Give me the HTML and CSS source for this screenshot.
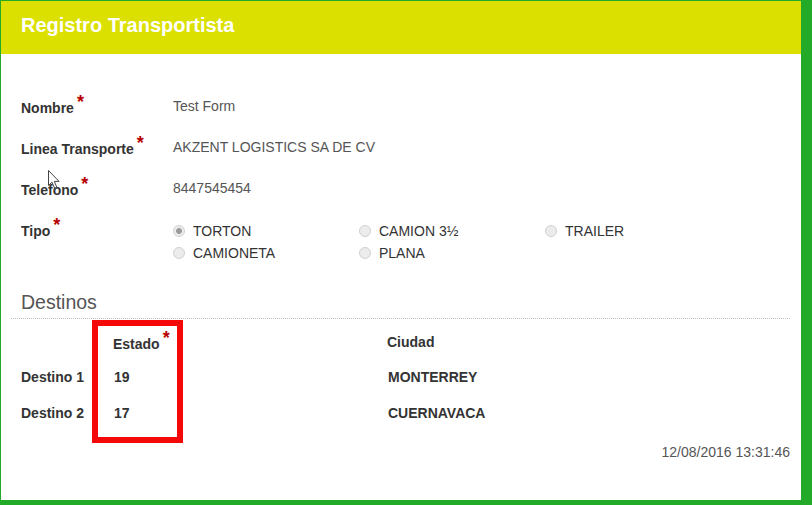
FILE: index.html
```html
<!DOCTYPE html>
<html lang="es">
<head>
<meta charset="utf-8">
<title>Registro Transportista</title>
<link rel="stylesheet" href="styles.css">
</head>
<body>
<div class="frame">
  <header class="topbar"><h1 class="title">Registro Transportista</h1></header>
  <main class="content">
    <div class="field">
      <div class="label">Nombre<span class="req">*</span></div>
      <div class="value">Test Form</div>
    </div>
    <div class="field">
      <div class="label">Linea Transporte<span class="req">*</span></div>
      <div class="value">AKZENT LOGISTICS SA DE CV</div>
    </div>
    <div class="field">
      <div class="label">Telefono<span class="req">*</span></div>
      <div class="value">8447545454</div>
    </div>
    <div class="field">
      <div class="label">Tipo<span class="req">*</span></div>
      <div class="radios">
        <label class="radio"><input type="radio" name="tipo" checked disabled><span>TORTON</span></label>
        <label class="radio"><input type="radio" name="tipo" disabled><span>CAMION 3½</span></label>
        <label class="radio"><input type="radio" name="tipo" disabled><span>TRAILER</span></label>
        <label class="radio"><input type="radio" name="tipo" disabled><span>CAMIONETA</span></label>
        <label class="radio"><input type="radio" name="tipo" disabled><span>PLANA</span></label>
      </div>
    </div>
    <h2 class="section">Destinos</h2>
    <div class="dest">
      <div class="dhead"></div>
      <div class="dhead">Estado<span class="req">*</span></div>
      <div class="dhead ciudad">Ciudad</div>
      <div class="dlabel r1">Destino 1</div>
      <div class="dval r1">19</div>
      <div class="dval r1 city">MONTERREY</div>
      <div class="dlabel">Destino 2</div>
      <div class="dval">17</div>
      <div class="dval city">CUERNAVACA</div>
    </div>
    <div class="stamp">12/08/2016 13:31:46</div>
  </main>
  <div class="highlight"></div>
  <svg class="cursor" width="14" height="20" viewBox="0 0 14 20" aria-hidden="true">
    <path d="M0.5 0.5 L0.5 15.5 L4 12.2 L6.6 18.2 L8.8 17.2 L6.3 11.4 L11 11.4 Z" fill="#fff" stroke="#444" stroke-width="1" stroke-linejoin="miter"/>
  </svg>
</div>
</body>
</html>
```
FILE: styles.css
```css
* { box-sizing: border-box; }
html, body { margin: 0; padding: 0; }
body {
  width: 812px;
  height: 505px;
  overflow: hidden;
  font-family: "Liberation Sans", Arial, sans-serif;
  background: #22aa28;
}
.frame {
  position: relative;
  width: 812px;
  height: 505px;
  background: #fff;
  border-style: solid;
  border-color: #22aa28;
  border-width: 1px 11px 5px 1px;
}
.topbar {
  height: 53px;
  background: #dce000;
  padding: 12px 20px 0;
}
.title {
  margin: 0;
  font-size: 20px;
  line-height: 24px;
  font-weight: bold;
  color: #fff;
}
.content {
  padding: 42px 11px 0 10px;
}
.field {
  display: flex;
  padding-left: 10px;
  margin-bottom: 19px;
}
.label {
  width: 152px;
  flex: none;
  font-size: 14px;
  line-height: 20px;
  font-weight: bold;
  color: #333;
  padding-top: 2px;
}
.req {
  color: #b80000;
  font-size: 18px;
  font-weight: bold;
  position: relative;
  top: -5px;
  margin-left: 3px;
  line-height: 0;
}
.value {
  font-size: 14px;
  line-height: 20px;
  color: #555;
}
.radios {
  display: grid;
  grid-template-columns: 186px 186px 186px;
  grid-auto-rows: 22px;
  margin-top: 2px;
}
.radio {
  display: flex;
  align-items: center;
  font-size: 14px;
  color: #333;
  height: 20px;
}
.radio input {
  -webkit-appearance: none;
  appearance: none;
  width: 12px;
  height: 12px;
  margin: 0 8px 0 0;
  border: 1px solid #d0d0d0;
  border-radius: 50%;
  background: #ececec;
}
.radio input:checked {
  background: radial-gradient(circle, #9a9a9a 0 2.6px, #ececec 3.2px);
}
.section {
  margin: 25px 0 0;
  padding: 0 0 4px 10px;
  font-size: 19.5px;
  line-height: 24px;
  font-weight: normal;
  color: #555;
  border-bottom: 1px dotted #bdbdbd;
}
.dest {
  display: grid;
  grid-template-columns: 92px 274px 1fr;
  grid-template-rows: 33px 36px 24px;
  padding-left: 10px;
  margin-top: 15px;
  font-size: 14px;
  line-height: 20px;
  font-weight: bold;
  color: #333;
}
.ciudad { margin-top: -2px; }
.dval { padding-left: 1px; }
.city { padding-left: 1px; }
.stamp {
  margin-top: 15px;
  text-align: right;
  font-size: 14px;
  line-height: 20px;
  color: #555;
}
.highlight {
  position: absolute;
  left: 91px;
  top: 319px;
  width: 91px;
  height: 123px;
  border: 6px solid #f40808;
}
.cursor {
  position: absolute;
  left: 47px;
  top: 169px;
}
```
